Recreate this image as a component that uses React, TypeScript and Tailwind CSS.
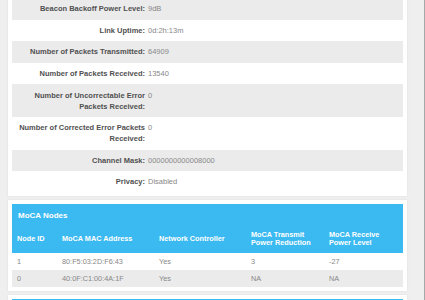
const stats: { label: string; value: string }[] = [
  { label: "Beacon Backoff Power Level:", value: "9dB" },
  { label: "Link Uptime:", value: "0d:2h:13m" },
  { label: "Number of Packets Transmitted:", value: "64909" },
  { label: "Number of Packets Received:", value: "13540" },
  { label: "Number of Uncorrectable Error Packets Received:", value: "0" },
  { label: "Number of Corrected Error Packets Received:", value: "0" },
  { label: "Channel Mask:", value: "0000000000008000" },
  { label: "Privacy:", value: "Disabled" },
];

const nodes = [
  { id: "1", mac: "80:F5:03:2D:F6:43", nc: "Yes", tx: "3", rx: "-27" },
  { id: "0", mac: "40:0F:C1:00:4A:1F", nc: "Yes", tx: "NA", rx: "NA" },
];

const cols = ["w-[45px]", "w-[97px]", "w-[92px]", "w-[78px]", "flex-1"];

export default function App() {
  return (
    <div
      className="h-[300px] w-[425px] overflow-hidden bg-[#efefef] border-r border-[#a3a9a9]"
      style={{ fontFamily: '"Liberation Sans", Arial, sans-serif' }}
    >
      {/* status card, scrolled so the top is cut */}
      <div className="ml-[8px] -mt-[6px] w-[399px] bg-white px-[4px] pt-[4px] pb-[3px] shadow-[0_0_2px_rgba(0,0,0,0.08)]">
        {stats.map((s, i) => (
          <div
            key={s.label}
            className={`flex gap-[3px] py-[5.3px] text-[7.5px] leading-[11px] ${i % 2 === 0 ? "bg-[#ebebeb]" : ""}`}
          >
            <div className="w-[133px] shrink-0 text-right font-bold text-[#505050]">{s.label}</div>
            <div className="text-[#888]">{s.value}</div>
          </div>
        ))}
      </div>

      {/* MoCA nodes */}
      <div className="ml-[8px] mt-[4px] w-[399px] bg-white px-[4px] pt-[4px] pb-[4px] shadow-[0_0_2px_rgba(0,0,0,0.08)]">
        <div className="bg-[#3bb9f1] text-white font-bold">
          <div className="px-[6px] pt-[7px] pb-[5px] text-[8px] leading-[10px]">MoCA Nodes</div>
          <div className="flex items-center py-[5px] text-[7.3px] leading-[8.5px]">
            <div className={`${cols[0]} pl-[5px]`}>Node ID</div>
            <div className={`${cols[1]} pl-[5px]`}>MoCA MAC Address</div>
            <div className={`${cols[2]} pl-[5px]`}>Network Controller</div>
            <div className={`${cols[3]} pl-[5px]`}>
              MoCA Transmit
              <br />
              Power Reduction
            </div>
            <div className={`${cols[4]} pl-[5px]`}>
              MoCA Receive
              <br />
              Power Level
            </div>
          </div>
        </div>
        {nodes.map((n, i) => (
          <div
            key={n.id}
            className={`flex py-[3px] text-[7.3px] leading-[11px] text-[#888] ${i % 2 === 1 ? "bg-[#ebebeb]" : ""}`}
          >
            <div className={`${cols[0]} pl-[5px]`}>{n.id}</div>
            <div className={`${cols[1]} pl-[5px]`}>{n.mac}</div>
            <div className={`${cols[2]} pl-[5px]`}>{n.nc}</div>
            <div className={`${cols[3]} pl-[5px]`}>{n.tx}</div>
            <div className={`${cols[4]} pl-[5px]`}>{n.rx}</div>
          </div>
        ))}
      </div>

      {/* next card, cut off at the bottom */}
      <div className="ml-[8px] mt-[4px] w-[399px] bg-white px-[4px] pt-[4px] shadow-[0_0_2px_rgba(0,0,0,0.08)]">
        <div className="h-[20px] bg-[#3bb9f1]" />
      </div>
    </div>
  );
}
